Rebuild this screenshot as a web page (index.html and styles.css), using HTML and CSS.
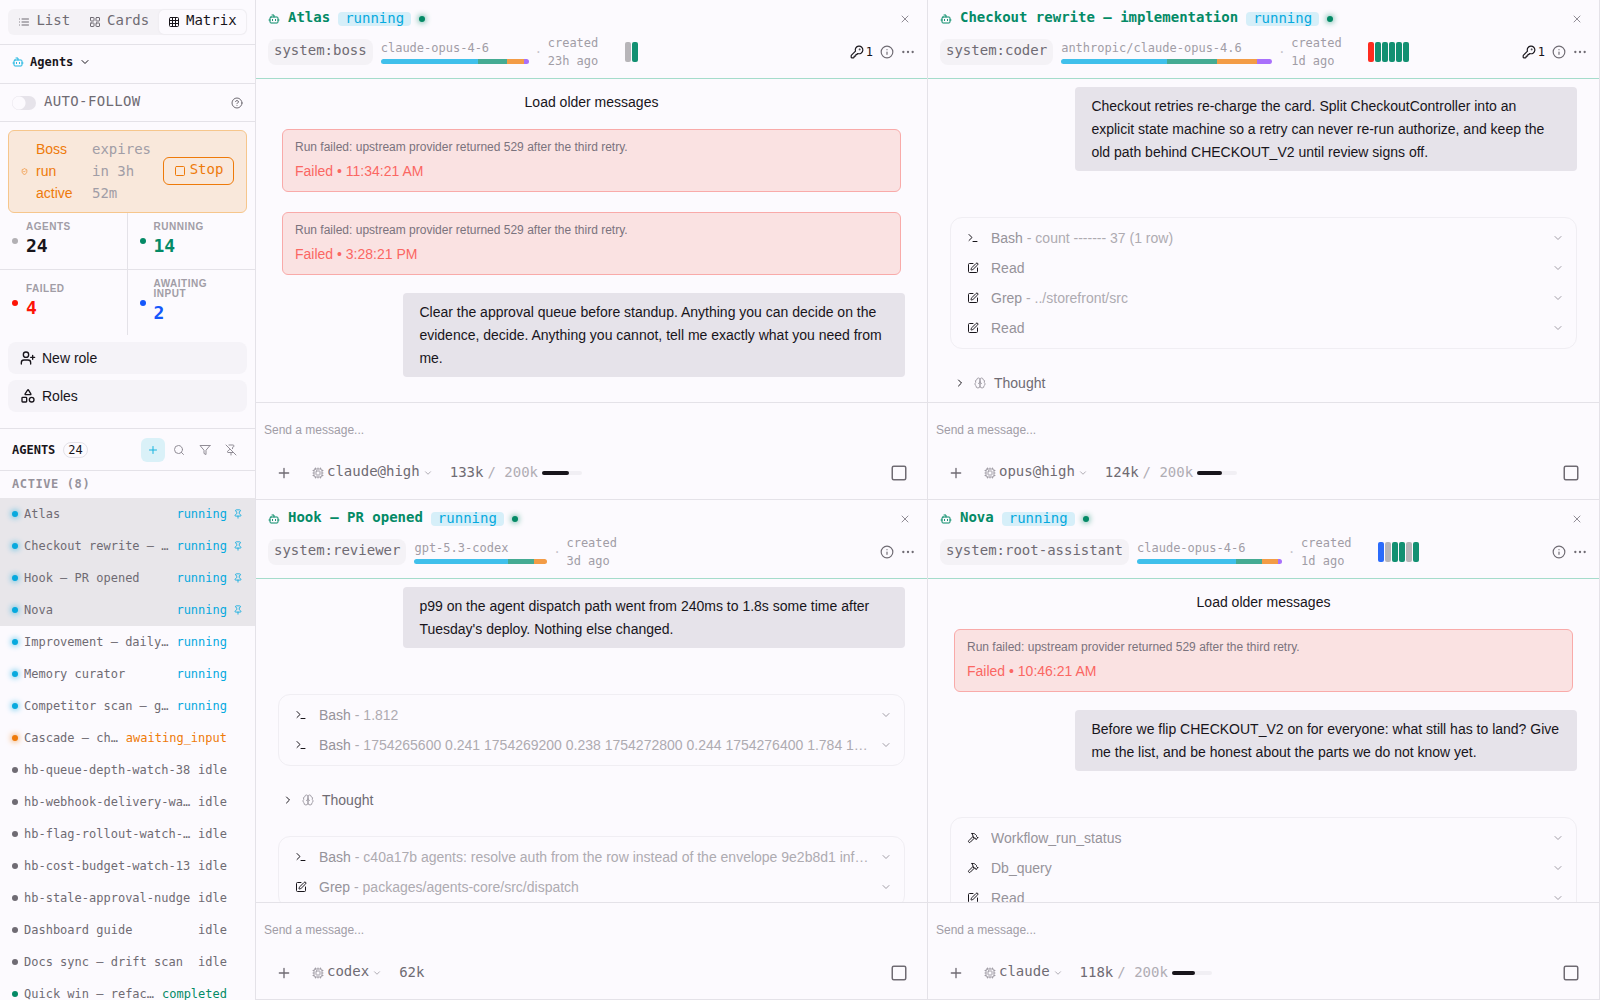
FILE: index.html
```html
<!DOCTYPE html>
<html lang="en">
<head>
    <meta charset="utf-8">
    <meta name="viewport" content="width=device-width, initial-scale=1">
    <title>Agents - Matrix</title>
    <link rel="stylesheet" href="styles.css">
</head>
<body>

<svg class="sprite" aria-hidden="true">
    <symbol id="bot" viewBox="0 0 24 24"><path d="M12 8V4H8"/><rect x="4" y="8" width="16" height="12" rx="2"/><path d="M2 14h2M20 14h2M15 13v2M9 13v2"/></symbol>
    <symbol id="list" viewBox="0 0 24 24"><path d="M3 6h.01M3 12h.01M3 18h.01M8 6h13M8 12h13M8 18h13"/></symbol>
    <symbol id="cards" viewBox="0 0 24 24"><rect x="3" y="3" width="7" height="7" rx="1"/><rect x="14" y="3" width="7" height="7" rx="1"/><rect x="14" y="14" width="7" height="7" rx="1"/><rect x="3" y="14" width="7" height="7" rx="1"/></symbol>
    <symbol id="grid" viewBox="0 0 24 24"><rect x="3" y="3" width="18" height="18" rx="2"/><path d="M3 9h18M3 15h18M9 3v18M15 3v18"/></symbol>
    <symbol id="down" viewBox="0 0 24 24"><path d="m6 9 6 6 6-6"/></symbol>
    <symbol id="right" viewBox="0 0 24 24"><path d="m9 18 6-6-6-6"/></symbol>
    <symbol id="help" viewBox="0 0 24 24"><circle cx="12" cy="12" r="10"/><path d="M9.09 9a3 3 0 0 1 5.83 1c0 2-3 3-3 3M12 17h.01"/></symbol>
    <symbol id="shield" viewBox="0 0 24 24"><path d="M20 13c0 5-3.5 7.5-7.66 8.95a1 1 0 0 1-.67-.01C7.5 20.5 4 18 4 13V6a1 1 0 0 1 1-1c2 0 4.5-1.2 6.24-2.72a1.17 1.17 0 0 1 1.52 0C14.51 3.81 17 5 19 5a1 1 0 0 1 1 1z"/><path d="m9 12 2 2 4-4"/></symbol>
    <symbol id="square" viewBox="0 0 24 24"><rect x="3" y="3" width="18" height="18" rx="2"/></symbol>
    <symbol id="user-plus" viewBox="0 0 24 24"><path d="M16 21v-2a4 4 0 0 0-4-4H6a4 4 0 0 0-4 4v2"/><circle cx="9" cy="7" r="4"/><path d="M19 8v6M22 11h-6"/></symbol>
    <symbol id="shapes" viewBox="0 0 24 24"><path d="M8.3 10a.7.7 0 0 1-.626-1.079L11.4 3a.7.7 0 0 1 1.198-.043L16.3 8.9a.7.7 0 0 1-.572 1.1Z"/><rect x="3" y="14" width="7" height="7" rx="1"/><circle cx="17.5" cy="17.5" r="3.5"/></symbol>
    <symbol id="plus" viewBox="0 0 24 24"><path d="M5 12h14M12 5v14"/></symbol>
    <symbol id="search" viewBox="0 0 24 24"><circle cx="11" cy="11" r="8"/><path d="m21 21-4.3-4.3"/></symbol>
    <symbol id="funnel" viewBox="0 0 24 24"><path d="M22 3H2l8 9.46V19l4 2v-8.54L22 3z"/></symbol>
    <symbol id="pin" viewBox="0 0 24 24"><path d="M12 17v5"/><path d="M9 10.76a2 2 0 0 1-1.11 1.79l-1.78.9A2 2 0 0 0 5 15.24V16a1 1 0 0 0 1 1h12a1 1 0 0 0 1-1v-.76a2 2 0 0 0-1.11-1.79l-1.78-.9A2 2 0 0 1 15 10.76V7a1 1 0 0 1 1-1 2 2 0 0 0 0-4H8a2 2 0 0 0 0 4 1 1 0 0 1 1 1z"/></symbol>
    <symbol id="pin-off" viewBox="0 0 24 24"><path d="M12 17v5"/><path d="M15 9.34V7a1 1 0 0 1 1-1 2 2 0 0 0 0-4H7.89"/><path d="m2 2 20 20"/><path d="M9 9v1.76a2 2 0 0 1-1.11 1.79l-1.78.9A2 2 0 0 0 5 15.24V16a1 1 0 0 0 1 1h11"/></symbol>
    <symbol id="close" viewBox="0 0 24 24"><path d="M18 6 6 18M6 6l12 12"/></symbol>
    <symbol id="key" viewBox="0 0 24 24"><path d="M2.586 17.414A2 2 0 0 0 2 18.828V21a1 1 0 0 0 1 1h3a1 1 0 0 0 1-1v-1a1 1 0 0 1 1-1h1a1 1 0 0 0 1-1v-1a1 1 0 0 1 1-1h.172a2 2 0 0 0 1.414-.586l.814-.814a6.5 6.5 0 1 0-4-4z"/><circle cx="16.5" cy="7.5" r=".5"/></symbol>
    <symbol id="info" viewBox="0 0 24 24"><circle cx="12" cy="12" r="10"/><path d="M12 16v-4M12 8h.01"/></symbol>
    <symbol id="more" viewBox="0 0 24 24"><circle cx="12" cy="12" r="1"/><circle cx="20" cy="12" r="1"/><circle cx="4" cy="12" r="1"/></symbol>
    <symbol id="terminal" viewBox="0 0 24 24"><path d="m4 17 6-6-6-6M12 19h8"/></symbol>
    <symbol id="edit" viewBox="0 0 24 24"><path d="M12 3H5a2 2 0 0 0-2 2v14a2 2 0 0 0 2 2h14a2 2 0 0 0 2-2v-7"/><path d="M18.375 2.625a1 1 0 0 1 3 3l-9.013 9.014a2 2 0 0 1-.853.505l-2.873.84a.5.5 0 0 1-.62-.62l.84-2.873a2 2 0 0 1 .506-.852z"/></symbol>
    <symbol id="hammer" viewBox="0 0 24 24"><path d="m15 12-8.373 8.373a1 1 0 1 1-3-3L12 9"/><path d="m18 15 4-4"/><path d="m21.5 11.5-1.914-1.914A2 2 0 0 1 19 8.172V7l-2.26-2.26a6 6 0 0 0-4.202-1.756L9 2.96l.92.82A6.18 6.18 0 0 1 12 8.4V10l2 2h1.172a2 2 0 0 1 1.414.586L18.5 14.5"/></symbol>
    <symbol id="brain" viewBox="0 0 24 24"><path d="M12 5a3 3 0 1 0-5.997.125 4 4 0 0 0-2.526 5.77 4 4 0 0 0 .556 6.588A4 4 0 1 0 12 18Z"/><path d="M12 5a3 3 0 1 1 5.997.125 4 4 0 0 1 2.526 5.77 4 4 0 0 1-.556 6.588A4 4 0 1 1 12 18Z"/><path d="M15 13a4.5 4.5 0 0 1-3-4 4.5 4.5 0 0 1-3 4"/></symbol>
    <symbol id="cpu" viewBox="0 0 24 24"><rect x="4" y="4" width="16" height="16" rx="2"/><rect x="8" y="8" width="8" height="8" rx="1"/><path d="M12 2v2M7 2v2M17 2v2M12 20v2M7 20v2M17 20v2M2 12h2M2 7h2M2 17h2M20 12h2M20 7h2M20 17h2"/></symbol>
</svg>

<div class="app">

<aside class="sidebar">
    <div class="views">
        <div class="segmented">
            <button type="button"><svg class="icon"><use href="#list"/></svg><span class="label">List</span></button>
            <button type="button"><svg class="icon"><use href="#cards"/></svg><span class="label">Cards</span></button>
            <button type="button" class="active"><svg class="icon"><use href="#grid"/></svg><span class="label">Matrix</span></button>
        </div>
    </div>

    <button type="button" class="scope"><svg class="icon bot"><use href="#bot"/></svg>Agents<svg class="icon"><use href="#down"/></svg></button>

    <div class="follow">
        <input type="checkbox" id="auto-follow">
        <label class="label" for="auto-follow">AUTO-FOLLOW</label>
        <button type="button" class="plain" aria-label="About auto-follow"><svg class="icon"><use href="#help"/></svg></button>
    </div>

    <div class="boss">
        <svg class="icon tiny"><use href="#shield"/></svg>
        <span class="boss-state">Boss run active</span>
        <span class="boss-expiry">expires in 3h 52m</span>
        <button type="button"><svg class="icon"><use href="#square"/></svg><span class="label">Stop</span></button>
    </div>

    <div class="stats">
        <div class="stat"><i class="dot"></i><div><small>AGENTS</small><b>24</b></div></div>
        <div class="stat green"><i class="dot"></i><div><small>RUNNING</small><b>14</b></div></div>
        <div class="stat red"><i class="dot"></i><div><small>FAILED</small><b>4</b></div></div>
        <div class="stat blue"><i class="dot"></i><div><small>AWAITING INPUT</small><b>2</b></div></div>
    </div>

    <div class="roles">
        <button type="button"><svg class="icon"><use href="#user-plus"/></svg>New role</button>
        <button type="button"><svg class="icon"><use href="#shapes"/></svg>Roles</button>
    </div>

    <div class="list-head">
        <h2>AGENTS</h2>
        <span class="count">24</span>
        <div class="list-tools">
            <button type="button" class="add" aria-label="New agent"><svg class="icon"><use href="#plus"/></svg></button>
            <button type="button" aria-label="Search"><svg class="icon"><use href="#search"/></svg></button>
            <button type="button" aria-label="Filter"><svg class="icon"><use href="#funnel"/></svg></button>
            <button type="button" aria-label="Unpin all"><svg class="icon"><use href="#pin-off"/></svg></button>
        </div>
    </div>

    <h3 class="group">ACTIVE (8)</h3>
    <ul class="agents">
        <li><a href="#atlas" class="running pinned"><i class="dot"></i><span class="name">Atlas</span><span class="status">running</span><svg class="icon"><use href="#pin"/></svg></a></li>
        <li><a href="#checkout" class="running pinned"><i class="dot"></i><span class="name">Checkout rewrite — …</span><span class="status">running</span><svg class="icon"><use href="#pin"/></svg></a></li>
        <li><a href="#hook" class="running pinned"><i class="dot"></i><span class="name">Hook — PR opened</span><span class="status">running</span><svg class="icon"><use href="#pin"/></svg></a></li>
        <li><a href="#nova" class="running pinned"><i class="dot"></i><span class="name">Nova</span><span class="status">running</span><svg class="icon"><use href="#pin"/></svg></a></li>
        <li><a href="#" class="running"><i class="dot"></i><span class="name">Improvement — daily…</span><span class="status">running</span></a></li>
        <li><a href="#" class="running"><i class="dot"></i><span class="name">Memory curator</span><span class="status">running</span></a></li>
        <li><a href="#" class="running"><i class="dot"></i><span class="name">Competitor scan — g…</span><span class="status">running</span></a></li>
        <li><a href="#" class="awaiting"><i class="dot"></i><span class="name">Cascade — ch…</span><span class="status">awaiting_input</span></a></li>
        <li><a href="#"><i class="dot"></i><span class="name">hb-queue-depth-watch-38</span><span class="status">idle</span></a></li>
        <li><a href="#"><i class="dot"></i><span class="name">hb-webhook-delivery-wa…</span><span class="status">idle</span></a></li>
        <li><a href="#"><i class="dot"></i><span class="name">hb-flag-rollout-watch-…</span><span class="status">idle</span></a></li>
        <li><a href="#"><i class="dot"></i><span class="name">hb-cost-budget-watch-13</span><span class="status">idle</span></a></li>
        <li><a href="#"><i class="dot"></i><span class="name">hb-stale-approval-nudge</span><span class="status">idle</span></a></li>
        <li><a href="#"><i class="dot"></i><span class="name">Dashboard guide</span><span class="status">idle</span></a></li>
        <li><a href="#"><i class="dot"></i><span class="name">Docs sync — drift scan</span><span class="status">idle</span></a></li>
        <li><a href="#" class="completed"><i class="dot"></i><span class="name">Quick win — refac…</span><span class="status">completed</span></a></li>
    </ul>
</aside>

<main class="matrix">

<section class="pane" id="atlas">
    <header>
        <div class="title-row">
            <svg class="icon"><use href="#bot"/></svg>
            <h1 class="label">Atlas</h1>
            <span class="badge">running</span>
            <i class="dot"></i>
            <button type="button" class="plain close" aria-label="Close"><svg class="icon"><use href="#close"/></svg></button>
        </div>
        <div class="meta-row">
            <span class="chip">system:boss</span>
            <div class="model">claude-opus-4-6
                <div class="usage" style="width: 148px"><i class="sky" style="width: 66%"></i><i class="teal" style="width: 19%"></i><i class="orange" style="width: 12%"></i><i class="purple" style="width: 3%"></i></div>
            </div>
            <span class="sep">·</span>
            <span class="created">created 23h ago</span>
            <div class="runs"><i></i><i class="ok"></i></div>
            <div class="actions">
                <button type="button" class="plain keys"><svg class="icon"><use href="#key"/></svg>1</button>
                <button type="button" class="plain" aria-label="Info"><svg class="icon"><use href="#info"/></svg></button>
                <button type="button" class="plain" aria-label="More"><svg class="icon"><use href="#more"/></svg></button>
            </div>
        </div>
    </header>
    <div class="chat">
        <button type="button" class="older">Load older messages</button>
        <div class="failure"><p>Run failed: upstream provider returned 529 after the third retry.</p><strong>Failed • 11:34:21 AM</strong></div>
        <div class="failure"><p>Run failed: upstream provider returned 529 after the third retry.</p><strong>Failed • 3:28:21 PM</strong></div>
        <div class="bubble">Clear the approval queue before standup. Anything you can decide on the evidence, decide. Anything you cannot, tell me exactly what you need from me.</div>
    </div>
    <form class="composer">
        <input type="text" placeholder="Send a message..." aria-label="Message Atlas">
        <div class="controls">
            <button type="button" class="plain attach" aria-label="Attach"><svg class="icon"><use href="#plus"/></svg></button>
            <button type="button" class="plain picker"><svg class="icon"><use href="#cpu"/></svg><span class="label">claude@high</span><svg class="icon caret"><use href="#down"/></svg></button>
            <span class="tokens">133k</span><span class="limit">/ 200k</span>
            <div class="meter"><i style="width: 67%"></i></div>
            <button type="button" class="plain stop" aria-label="Stop"><svg class="icon"><use href="#square"/></svg></button>
        </div>
    </form>
</section>

<section class="pane" id="checkout">
    <header>
        <div class="title-row">
            <svg class="icon"><use href="#bot"/></svg>
            <h1 class="label">Checkout rewrite — implementation</h1>
            <span class="badge">running</span>
            <i class="dot"></i>
            <button type="button" class="plain close" aria-label="Close"><svg class="icon"><use href="#close"/></svg></button>
        </div>
        <div class="meta-row">
            <span class="chip">system:coder</span>
            <div class="model">anthropic/claude-opus-4.6
                <div class="usage" style="width: 211px"><i class="sky" style="width: 50%"></i><i class="teal" style="width: 24%"></i><i class="orange" style="width: 19%"></i><i class="purple" style="width: 7%"></i></div>
            </div>
            <span class="sep">·</span>
            <span class="created">created 1d ago</span>
            <div class="runs"><i class="bad"></i><i class="ok"></i><i class="ok"></i><i class="ok"></i><i class="ok"></i><i class="ok"></i></div>
            <div class="actions">
                <button type="button" class="plain keys"><svg class="icon"><use href="#key"/></svg>1</button>
                <button type="button" class="plain" aria-label="Info"><svg class="icon"><use href="#info"/></svg></button>
                <button type="button" class="plain" aria-label="More"><svg class="icon"><use href="#more"/></svg></button>
            </div>
        </div>
    </header>
    <div class="chat">
        <div class="bubble">Checkout retries re-charge the card. Split CheckoutController into an explicit state machine so a retry can never re-run authorize, and keep the old path behind CHECKOUT_V2 until review signs off.</div>
        <div class="tools">
            <button type="button"><svg class="icon"><use href="#terminal"/></svg><span>Bash<em> - count ------- 37 (1 row)</em></span><svg class="icon caret"><use href="#down"/></svg></button>
            <button type="button"><svg class="icon"><use href="#edit"/></svg><span>Read</span><svg class="icon caret"><use href="#down"/></svg></button>
            <button type="button"><svg class="icon"><use href="#edit"/></svg><span>Grep<em> - ../storefront/src</em></span><svg class="icon caret"><use href="#down"/></svg></button>
            <button type="button"><svg class="icon"><use href="#edit"/></svg><span>Read</span><svg class="icon caret"><use href="#down"/></svg></button>
        </div>
        <button type="button" class="thought"><svg class="icon"><use href="#right"/></svg><svg class="icon brain"><use href="#brain"/></svg>Thought</button>
    </div>
    <form class="composer">
        <input type="text" placeholder="Send a message..." aria-label="Message Checkout rewrite">
        <div class="controls">
            <button type="button" class="plain attach" aria-label="Attach"><svg class="icon"><use href="#plus"/></svg></button>
            <button type="button" class="plain picker"><svg class="icon"><use href="#cpu"/></svg><span class="label">opus@high</span><svg class="icon caret"><use href="#down"/></svg></button>
            <span class="tokens">124k</span><span class="limit">/ 200k</span>
            <div class="meter"><i style="width: 62%"></i></div>
            <button type="button" class="plain stop" aria-label="Stop"><svg class="icon"><use href="#square"/></svg></button>
        </div>
    </form>
</section>

<section class="pane" id="hook">
    <header>
        <div class="title-row">
            <svg class="icon"><use href="#bot"/></svg>
            <h1 class="label">Hook — PR opened</h1>
            <span class="badge">running</span>
            <i class="dot"></i>
            <button type="button" class="plain close" aria-label="Close"><svg class="icon"><use href="#close"/></svg></button>
        </div>
        <div class="meta-row">
            <span class="chip">system:reviewer</span>
            <div class="model">gpt-5.3-codex
                <div class="usage" style="width: 133px"><i class="sky" style="width: 70%"></i><i class="teal" style="width: 20%"></i><i class="orange" style="width: 10%"></i></div>
            </div>
            <span class="sep">·</span>
            <span class="created">created 3d ago</span>
            <div class="actions">
                <button type="button" class="plain" aria-label="Info"><svg class="icon"><use href="#info"/></svg></button>
                <button type="button" class="plain" aria-label="More"><svg class="icon"><use href="#more"/></svg></button>
            </div>
        </div>
    </header>
    <div class="chat">
        <div class="bubble">p99 on the agent dispatch path went from 240ms to 1.8s some time after Tuesday's deploy. Nothing else changed.</div>
        <div class="tools">
            <button type="button"><svg class="icon"><use href="#terminal"/></svg><span>Bash<em> - 1.812</em></span><svg class="icon caret"><use href="#down"/></svg></button>
            <button type="button"><svg class="icon"><use href="#terminal"/></svg><span>Bash<em> - 1754265600 0.241 1754269200 0.238 1754272800 0.244 1754276400 1.784 1…</em></span><svg class="icon caret"><use href="#down"/></svg></button>
        </div>
        <button type="button" class="thought"><svg class="icon"><use href="#right"/></svg><svg class="icon brain"><use href="#brain"/></svg>Thought</button>
        <div class="tools">
            <button type="button"><svg class="icon"><use href="#terminal"/></svg><span>Bash<em> - c40a17b agents: resolve auth from the row instead of the envelope 9e2b8d1 inf…</em></span><svg class="icon caret"><use href="#down"/></svg></button>
            <button type="button"><svg class="icon"><use href="#edit"/></svg><span>Grep<em> - packages/agents-core/src/dispatch</em></span><svg class="icon caret"><use href="#down"/></svg></button>
        </div>
    </div>
    <form class="composer">
        <input type="text" placeholder="Send a message..." aria-label="Message Hook">
        <div class="controls">
            <button type="button" class="plain attach" aria-label="Attach"><svg class="icon"><use href="#plus"/></svg></button>
            <button type="button" class="plain picker"><svg class="icon"><use href="#cpu"/></svg><span class="label">codex</span><svg class="icon caret"><use href="#down"/></svg></button>
            <span class="tokens">62k</span>
            <button type="button" class="plain stop" aria-label="Stop"><svg class="icon"><use href="#square"/></svg></button>
        </div>
    </form>
</section>

<section class="pane" id="nova">
    <header>
        <div class="title-row">
            <svg class="icon"><use href="#bot"/></svg>
            <h1 class="label">Nova</h1>
            <span class="badge">running</span>
            <i class="dot"></i>
            <button type="button" class="plain close" aria-label="Close"><svg class="icon"><use href="#close"/></svg></button>
        </div>
        <div class="meta-row">
            <span class="chip">system:root-assistant</span>
            <div class="model">claude-opus-4-6
                <div class="usage" style="width: 145px"><i class="sky" style="width: 68%"></i><i class="teal" style="width: 18%"></i><i class="orange" style="width: 11%"></i><i class="purple" style="width: 3%"></i></div>
            </div>
            <span class="sep">·</span>
            <span class="created">created 1d ago</span>
            <div class="runs"><i class="now"></i><i></i><i class="ok"></i><i class="ok"></i><i></i><i class="ok"></i></div>
            <div class="actions">
                <button type="button" class="plain" aria-label="Info"><svg class="icon"><use href="#info"/></svg></button>
                <button type="button" class="plain" aria-label="More"><svg class="icon"><use href="#more"/></svg></button>
            </div>
        </div>
    </header>
    <div class="chat">
        <button type="button" class="older">Load older messages</button>
        <div class="failure"><p>Run failed: upstream provider returned 529 after the third retry.</p><strong>Failed • 10:46:21 AM</strong></div>
        <div class="bubble">Before we flip CHECKOUT_V2 on for everyone: what still has to land? Give me the list, and be honest about the parts we do not know yet.</div>
        <div class="tools">
            <button type="button"><svg class="icon"><use href="#hammer"/></svg><span>Workflow_run_status</span><svg class="icon caret"><use href="#down"/></svg></button>
            <button type="button"><svg class="icon"><use href="#hammer"/></svg><span>Db_query</span><svg class="icon caret"><use href="#down"/></svg></button>
            <button type="button"><svg class="icon"><use href="#edit"/></svg><span>Read</span><svg class="icon caret"><use href="#down"/></svg></button>
        </div>
    </div>
    <form class="composer">
        <input type="text" placeholder="Send a message..." aria-label="Message Nova">
        <div class="controls">
            <button type="button" class="plain attach" aria-label="Attach"><svg class="icon"><use href="#plus"/></svg></button>
            <button type="button" class="plain picker"><svg class="icon"><use href="#cpu"/></svg><span class="label">claude</span><svg class="icon caret"><use href="#down"/></svg></button>
            <span class="tokens">118k</span><span class="limit">/ 200k</span>
            <div class="meter"><i style="width: 59%"></i></div>
            <button type="button" class="plain stop" aria-label="Stop"><svg class="icon"><use href="#square"/></svg></button>
        </div>
    </form>
</section>

</main>
</div>

</body>
</html>
```
FILE: styles.css
```css
:root {
    --bg: #fcfafe;
    --line: #e4e2e8;
    --text: #18151b;
    --muted: #6f6b73;
    --faint: #a19da6;
    --green: #048a66;
    --sky: #06a9de;
    --orange: #ee7a0a;
    --mono: "DejaVu Sans Mono", monospace;
    --sans: "Liberation Sans", Arial, sans-serif;
}

* {
    box-sizing: border-box;
}

body {
    margin: 0;
    background: var(--bg);
    color: var(--text);
    font: 14px/22px var(--sans);
}

h1, h2, h3, p, ul {
    margin: 0;
    padding: 0;
}

button {
    margin: 0;
    padding: 0;
    border: 0;
    background: none;
    color: inherit;
    font: inherit;
    cursor: pointer;
}

.plain {
    display: flex;
    align-items: center;
}

.sprite {
    display: none;
}

.icon {
    flex: none;
    display: block;
    width: 12px;
    height: 12px;
    fill: none;
    stroke: currentColor;
    stroke-width: 2;
    stroke-linecap: round;
    stroke-linejoin: round;
}

/* larger mono text rides a little above the icon it sits next to */
.label {
    padding-bottom: 4px;
    font-family: var(--mono);
    font-size: 14px;
    line-height: 20px;
}

.dot {
    flex: none;
    width: 6px;
    height: 6px;
    border-radius: 50%;
    background: currentColor;
}

.app {
    display: grid;
    grid-template-columns: 256px 1fr;
    height: 100vh;
    overflow: hidden;
}

/* sidebar */

.sidebar {
    min-height: 0;
    overflow: hidden;
    border-right: 1px solid var(--line);
}

.views {
    padding: 9px 8px;
    border-bottom: 1px solid var(--line);
}

.segmented {
    display: flex;
    padding: 1px;
    border-radius: 6px;
    background: #f4f2f6;
    color: var(--muted);
}

.segmented button {
    flex: auto;
    display: flex;
    align-items: center;
    justify-content: center;
    gap: 6px;
    border-radius: 5px;
}

.segmented .active {
    background: var(--bg);
    color: var(--text);
    box-shadow: 0 0 2px #e4e2e8;
}

.scope {
    display: flex;
    align-items: center;
    gap: 6px;
    width: 100%;
    height: 39px;
    padding: 0 12px 4px;
    border-bottom: 1px solid var(--line);
    font: bold 12px/18px var(--mono);
}

.scope .bot {
    color: #16b3df;
}

.follow {
    display: flex;
    align-items: center;
    gap: 8px;
    height: 38px;
    padding: 0 12px;
    border-bottom: 1px solid var(--line);
    color: var(--muted);
}

.follow .label {
    flex: 1;
    letter-spacing: 0.025em;
}

.follow input {
    appearance: none;
    width: 24px;
    height: 14px;
    margin: 0;
    border-radius: 7px;
    background: radial-gradient(circle at 7px 7px, var(--bg) 6px, #e6e3ea 7px);
}

.boss {
    display: flex;
    align-items: center;
    margin: 8px 8px 0;
    padding: 7px 12px 8px;
    border: 1px solid #f6c68c;
    border-radius: 6px;
    background: #f9e8db;
    color: var(--orange);
}

.boss .tiny {
    width: 7px;
    height: 7px;
}

.boss-state {
    width: 56px;
    padding-left: 8px;
}

.boss-expiry {
    width: 60px;
    margin: 0 11px 0 8px;
    color: var(--faint);
    font-family: var(--mono);
}

.boss button {
    flex: 1;
    display: flex;
    align-items: center;
    justify-content: center;
    gap: 4px;
    height: 28px;
    border: 1px solid var(--orange);
    border-radius: 6px;
}

.stats {
    display: grid;
    grid-template-columns: 1fr 1fr;
    grid-template-rows: 57px 65px;
}

.stat {
    display: flex;
    align-items: center;
    gap: 8px;
    padding: 0 20px 0 12px;
}

.stat:nth-child(odd) {
    border-right: 1px solid var(--line);
}

.stat:nth-child(-n+2) {
    border-bottom: 1px solid var(--line);
}

.stat .dot {
    background: #b2b0b4;
}

.stat small {
    display: block;
    color: var(--faint);
    font-size: 10px;
    font-weight: bold;
    line-height: 10px;
    letter-spacing: 0.05em;
}

.stat b {
    display: block;
    font: bold 18px/28px var(--mono);
}

.green b { color: var(--green); }
.red b { color: #fd1406; }
.blue b { color: #1457fb; }
.green .dot { background: var(--green); }
.red .dot { background: #fd1406; }
.blue .dot { background: #1457fb; }

.roles {
    display: flex;
    flex-direction: column;
    gap: 6px;
    padding: 7px 8px 16px;
    border-bottom: 1px solid var(--line);
}

.roles button {
    display: flex;
    align-items: center;
    gap: 6px;
    height: 32px;
    padding: 0 12px;
    border-radius: 8px;
    background: #f5f3f8;
}

.roles .icon {
    width: 16px;
    height: 16px;
}

.list-head {
    display: flex;
    align-items: center;
    height: 42px;
    padding: 0 12px;
    border-bottom: 1px solid var(--line);
}

.list-head h2 {
    font: bold 12px/18px var(--mono);
}

.count {
    margin-left: 8px;
    padding: 0 4px;
    border: 1px solid var(--line);
    border-radius: 8px;
    font: 12px/14px var(--mono);
}

.list-tools {
    display: flex;
    gap: 2px;
    margin-left: auto;
    color: #918d96;
}

.list-tools button {
    display: grid;
    place-items: center;
    width: 24px;
    height: 24px;
    border-radius: 6px;
}

.list-tools .add {
    background: #daf1f8;
    color: #16b3df;
}

.group {
    padding: 4px 12px 5px;
    color: #96929b;
    font: bold 12px/18px var(--mono);
    letter-spacing: 0.05em;
}

.agents {
    list-style: none;
    font: 12px/18px var(--mono);
}

.agents a {
    display: flex;
    align-items: center;
    gap: 6px;
    height: 32px;
    padding: 0 28px 0 12px;
    color: var(--muted);
    text-decoration: none;
}

.agents .name {
    flex: 1;
    min-width: 0;
    overflow: hidden;
    text-overflow: ellipsis;
    white-space: nowrap;
}

.agents .pinned {
    padding-right: 12px;
    background: #e8e6ea;
}

.agents .icon {
    width: 10px;
    height: 10px;
    color: var(--sky);
}

.running .dot, .running .status { color: var(--sky); }
.awaiting .dot, .awaiting .status { color: var(--orange); }
.completed .dot, .completed .status { color: var(--green); }

.running .dot, .awaiting .dot {
    box-shadow: 0 0 6px currentColor;
}

/* matrix of agent panes */

.matrix {
    display: grid;
    grid-template-columns: 1fr 1fr;
    grid-template-rows: 1fr 1fr;
    min-width: 0;
    min-height: 0;
}

.pane {
    display: flex;
    flex-direction: column;
    min-width: 0;
    min-height: 0;
    border-right: 1px solid var(--line);
    border-bottom: 1px solid var(--line);
}

.pane header {
    padding: 9px 12px 8px;
    border-bottom: 1px solid #a5dccb;
}

.title-row {
    display: flex;
    align-items: center;
    gap: 8px;
    height: 20px;
    color: var(--green);
}

.title-row h1 {
    font-weight: bold;
}

.title-row .dot {
    box-shadow: 0 0 6px currentColor;
}

.badge {
    padding: 0 7px 2px;
    border-radius: 4px;
    background: #d6eff9;
    color: var(--sky);
    font: 14px/12px var(--mono);
}

.close {
    margin: 0 4px 0 auto;
    color: #918d96;
}

.meta-row {
    display: flex;
    align-items: center;
    gap: 8px;
    height: 36px;
    margin-top: 5px;
    color: var(--faint);
    font: 12px/18px var(--mono);
}

.chip {
    padding: 0 6px 4px;
    border-radius: 8px;
    background: #f4f2f6;
    color: var(--muted);
    font-size: 14px;
    line-height: 22px;
}

.model {
    padding-bottom: 2px;
}

.usage {
    display: flex;
    height: 5px;
    margin-top: 2px;
    overflow: hidden;
    border-radius: 3px;
}

.sky { background: #40c0eb; }
.teal { background: #45ab93; }
.orange { background: #f39c46; }
.purple { background: #a970fb; }

.sep {
    width: 3px;
    color: #c6c3ca;
    text-indent: -2px;
}

.created {
    width: 69px;
}

.runs {
    display: flex;
    gap: 1px;
}

.runs i {
    width: 6px;
    height: 20px;
    border-radius: 2px;
    background: #b7b5b9;
}

.runs .ok { background: #129072; }
.runs .bad { background: #fe2c20; }
.runs .now { background: #2b6bfb; }

.actions {
    display: flex;
    gap: 7px;
    margin-left: auto;
    color: var(--muted);
}

.actions .icon {
    width: 14px;
    height: 14px;
}

.keys {
    gap: 2px;
    color: var(--text);
}

.chat {
    flex: 1;
    display: flex;
    flex-direction: column;
    min-height: 0;
    padding: 8px 22px 0;
    overflow: hidden;
}

.chat > * {
    flex: none;
}

.older {
    margin-bottom: 12px;
    line-height: 30px;
}

.failure {
    display: flex;
    flex-direction: column;
    gap: 5px;
    margin: 0 4px;
    padding: 9px 12px;
    border: 1px solid #f9aaa9;
    border-radius: 6px;
    background: #fae2e2;
}

.failure p {
    color: #7b737d;
    font-size: 12px;
    line-height: 16px;
}

.failure strong {
    color: #fb6762;
    font-weight: normal;
}

.failure + .failure {
    margin-top: 20px;
}

.failure + .bubble {
    margin-top: 18px;
}

.bubble {
    align-self: flex-end;
    width: 80%;
    padding: 8px 16px 7px;
    border-radius: 4px;
    background: #e6e3ea;
    line-height: 23px;
}

.bubble + .tools {
    margin-top: 46px;
}

.tools {
    padding: 5px 12px 5px 16px;
    border: 1px solid #f0eef3;
    border-radius: 12px;
    color: #96939a;
}

.tools button {
    display: flex;
    align-items: center;
    gap: 8px;
    width: 100%;
    height: 30px;
    text-align: left;
}

.tools span {
    flex: 1;
    min-width: 0;
    margin-left: 4px;
    overflow: hidden;
    text-overflow: ellipsis;
    white-space: nowrap;
}

.tools em {
    color: #aeabb1;
    font-style: normal;
}

.tools .icon {
    color: #18151b;
}

.tools .caret {
    color: #a19da6;
}

.thought {
    display: flex;
    align-items: center;
    gap: 8px;
    margin: 23px 0 25px;
    padding-left: 4px;
    color: var(--muted);
}

.thought .icon {
    color: var(--text);
}

.thought .brain {
    color: #a19da6;
}

.composer {
    border-top: 1px solid var(--line);
    padding: 18px 8px 10px;
}

.composer input {
    display: block;
    width: 100%;
    height: 18px;
    padding: 0;
    border: 0;
    outline: 0;
    background: none;
    font: 12px/18px var(--sans);
}

.composer input::placeholder {
    color: var(--faint);
}

.controls {
    display: flex;
    align-items: center;
    height: 32px;
    margin-top: 18px;
    padding: 0 11px 0 12px;
    color: var(--muted);
    font: 14px/20px var(--mono);
}

.attach .icon {
    width: 16px;
    height: 16px;
}

.picker {
    gap: 3px;
    margin: 0 17px 0 20px;
}

.picker .icon {
    color: var(--faint);
}

.picker .caret {
    width: 10px;
    height: 10px;
}

.tokens, .limit {
    padding-bottom: 2px;
}

.limit {
    margin: 0 4px;
    color: #b0adb4;
}

.meter {
    width: 40px;
    height: 4px;
    border-radius: 2px;
    background: #f1eff4;
}

.meter i {
    display: block;
    height: 4px;
    border-radius: 2px;
    background: var(--text);
}

.stop {
    margin-left: auto;
}

.stop .icon {
    width: 18px;
    height: 18px;
}
```
